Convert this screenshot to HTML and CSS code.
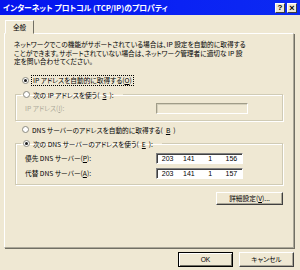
FILE: index.html
```html
<!DOCTYPE html>
<html lang="ja">
<head>
  <meta charset="UTF-8">
  <title>インターネット プロトコル (TCP/IP)のプロパティ</title>
  <link rel="stylesheet" href="styles.css">
</head>
<body>
  <div class="dlg">
    <div class="titlebar">
      <span class="title">インターネット プロトコル (TCP/IP)のプロパティ</span>
      <span class="cap-btn">?</span>
      <span class="cap-btn close">×</span>
    </div>
    <div class="content">
      <div class="tabs"><span class="tab">全般</span></div>
      <div class="panel">
        <p class="desc">ネットワークでこの機能がサポートされている場合は、IP 設定を自動的に取得する<br>ことができます。サポートされていない場合は、ネットワーク管理者に適切な IP 設<br>定を問い合わせてください。</p>

        <label class="opt first"><span class="radio on"></span><span class="focus">IP アドレスを自動的に取得する(<u>O</u>)</span></label>

        <fieldset class="group g1">
          <legend><label class="opt"><span class="radio"></span>次の IP アドレスを使う(<u>S</u>):</label></legend>
          <div class="field off">
            <span class="lbl">IP アドレス(<u>I</u>):</span>
            <span class="ip"></span>
          </div>
        </fieldset>

        <label class="opt mid"><span class="radio"></span>DNS サーバーのアドレスを自動的に取得する(<u>B</u>)</label>

        <fieldset class="group g2">
          <legend><label class="opt"><span class="radio on"></span>次の DNS サーバーのアドレスを使う(<u>E</u>):</label></legend>
          <div class="field">
            <span class="lbl">優先 DNS サーバー(<u>P</u>):</span>
            <span class="ip on"><span>203</span><span>141</span><span>1</span><span>156</span></span>
          </div>
          <div class="field">
            <span class="lbl">代替 DNS サーバー(<u>A</u>):</span>
            <span class="ip on"><span>203</span><span>141</span><span>1</span><span>157</span></span>
          </div>
        </fieldset>

        <button class="btn adv">詳細設定(<u>V</u>)...</button>
      </div>
      <div class="actions">
        <button class="btn default">OK</button>
        <button class="btn">キャンセル</button>
      </div>
    </div>
  </div>
</body>
</html>
```

FILE: styles.css
```css
* { margin: 0; padding: 0; box-sizing: border-box; }
body { background: #efe8d3; font-family: "Noto Sans CJK JP", "Liberation Sans", sans-serif; color: #000; font-feature-settings: "palt"; }
.dlg { width: 300px; height: 270px; background: #efe8d3; overflow: hidden; display: flex; flex-direction: column; }

/* title bar */
.titlebar { height: 15px; background: linear-gradient(90deg, #0414ee, #0a22f4 60%, #0c2af2); display: flex; align-items: center; padding: 0 3px 0 3px; gap: 1px; }
.title { flex: 1; color: #fff; font-weight: bold; font-size: 7.8px; line-height: 15px; white-space: nowrap; }
.cap-btn { width: 10px; height: 10px; background: #efe8d3; border: 1px solid; border-color: #fff #404040 #404040 #fff; font: bold 8px/8px "Liberation Sans", sans-serif; text-align: center; color: #000; }
.cap-btn.close { font-size: 9px; margin-left: 1px; }

.content { flex: 1; padding: 5px 6px 0 4px; display: flex; flex-direction: column; }

/* tab */
.tabs { display: flex; padding-left: 1px; }
.tab { position: relative; z-index: 1; width: 29px; height: 14px; margin-bottom: -1px; background: #efe8d3; border: 1px solid; border-color: #fff #716f64 #efe8d3 #fff; font-size: 6.6px; line-height: 12px; text-align: center; }

.panel { height: 215px; border: 1px solid; border-color: #fff #aca899 #aca899 #fff; box-shadow: 1px 1px 0 #716f64; padding: 6px 10px 0 9px; display: flex; flex-direction: column; font-size: 6.5px; }

.desc { font-size: 6.7px; line-height: 8.5px; white-space: nowrap; }

/* radios */
.opt { display: flex; align-items: center; gap: 3px; height: 10px; line-height: 10px; white-space: nowrap; font-size: 6.7px; }
.opt.first { margin: 10px 0 0 8px; }
.opt.mid { margin: 4px 0 0 8px; }
.radio { width: 7px; height: 7px; border-radius: 50%; border: 1px solid #8a8a80; background: #fff; display: flex; align-items: center; justify-content: center; flex: none; }
.radio.on::after { content: ""; width: 3px; height: 3px; border-radius: 50%; background: #1a1a1a; }
.focus { outline: 1px dotted #000; outline-offset: 0; padding: 0 1px; line-height: 9px; }
u { text-decoration: underline; text-underline-offset: 1px; }

/* group boxes */
.group { margin: 4px 0 0 1px; border: 1px solid #d0cbb5; box-shadow: 1px 1px 0 #fff, inset 1px 1px 0 #fff; padding: 0 0 6px 0; }
.group legend { margin-left: 5px; padding: 0 9px 0 2px; }
.g2 { padding-bottom: 5px; }
.field { display: flex; align-items: center; height: 11px; margin-top: 3px; padding-left: 9px; font-size: 6.7px; white-space: nowrap; }
.g2 .field { margin-top: 4px; }
.lbl { width: 131px; flex: none; }
.off .lbl { color: #aca899; }
.ip { width: 92px; height: 11px; border: 1px solid; border-color: #a09c88 #fff #fff #a09c88; box-shadow: inset 1px 1px 0 #d4cfbb; }
.ip.on { width: 87px; background: #fff; border-color: #808080 #fff #fff #808080; box-shadow: inset 1px 1px 0 #404040; display: grid; grid-template-columns: repeat(4, 1fr); font: 7px/9px "Liberation Sans", sans-serif; text-align: center; }

/* buttons */
.btn { background: #efe8d3; border: 1px solid; border-color: #fff #404040 #404040 #fff; box-shadow: inset -1px -1px 0 #aca899; font-family: "Noto Sans CJK JP", "Liberation Sans", sans-serif; font-size: 6.7px; line-height: 11px; color: #000; font-feature-settings: "palt"; }
.adv { align-self: flex-end; width: 67px; height: 13px; margin-top: 7px; }
.actions { display: flex; justify-content: flex-end; gap: 6px; margin-top: 4px; }
.actions .btn { width: 55px; height: 15px; font-family: "Liberation Sans", "Noto Sans CJK JP", sans-serif; }
.btn.default { outline: 1px solid #000; outline-offset: -1px; border-color: #000; box-shadow: inset 1px 1px 0 #fff, inset -1px -1px 0 #716f64; }
```
